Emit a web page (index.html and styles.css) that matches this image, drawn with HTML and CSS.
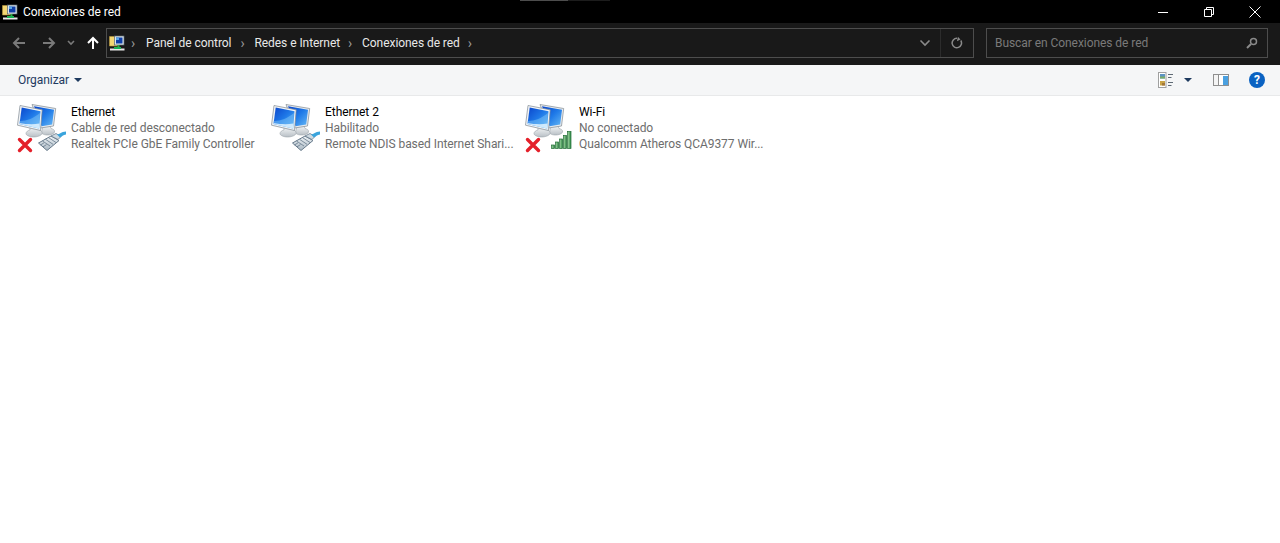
FILE: index.html
```html
<!DOCTYPE html>
<html lang="es">
<head>
<meta charset="utf-8">
<title>Conexiones de red</title>
<link rel="stylesheet" href="styles.css">
</head>
<body>
<svg class="defs" width="0" height="0" aria-hidden="true">
  <defs>
    <linearGradient id="scr" x1="0" y1="0" x2="1" y2="1">
      <stop offset="0" stop-color="#0a45cc"/><stop offset=".5" stop-color="#1f7ae8"/><stop offset="1" stop-color="#66b8f5"/>
    </linearGradient>
    <linearGradient id="foot" x1="0" y1="0" x2="0" y2="1">
      <stop offset="0" stop-color="#f4f6f7"/><stop offset="1" stop-color="#b9c0c6"/>
    </linearGradient>
    <linearGradient id="plug" x1="0" y1="0" x2="0" y2="1">
      <stop offset="0" stop-color="#eef3f6"/><stop offset="1" stop-color="#aab8c3"/>
    </linearGradient>
    <linearGradient id="bar" x1="0" y1="0" x2="1" y2="0">
      <stop offset="0" stop-color="#a9d8a8"/><stop offset="1" stop-color="#2e8a45"/>
    </linearGradient>
    <symbol id="computers" viewBox="0 0 50 54">
      <path d="M27 26h7l1 2.500c2 .5 4 1.500 3.500 3.500-.5 2-4 3-7 3-3 0-6-1-6-3z" fill="url(#foot)" stroke="#9aa3aa" stroke-width=".6"/>
      <path d="M16 4.500 39.700 8.500 37.500 26 24.500 28z" fill="#e8ebee" stroke="#7f8a92" stroke-width=".7"/>
      <path d="M18 6.300 38 9.700 36.200 24.500 25.500 26.200z" fill="url(#scr)"/>
      <path d="M14 27h8l1 2.800c2 .6 3.500 1.700 3 3.700-.6 2.200-5 3.500-8.500 3.500S10 35.500 10 33.500c0-1.800 2-3 4-3.600z" fill="url(#foot)" stroke="#9aa3aa" stroke-width=".6"/>
      <path d="M4 5.500 26.200 9.800 24.500 30.500 1.500 25.200z" fill="#f2f4f6" stroke="#7f8a92" stroke-width=".7"/>
      <path d="M5.700 7.500 24.500 11.200 23.100 28.500 3.500 24z" fill="url(#scr)"/>
      <path d="M3.800 21C11 21 18 18 24 13l-.9 15.500L3.500 24z" fill="#7cc4f7" opacity=".5"/>
      <path d="M3.500 23C11 24.500 18 24.500 23.400 23.500l-.3 5L3.500 24z" fill="#e3f3fd" opacity=".85"/>
    </symbol>
    <symbol id="xmark" viewBox="0 0 16 16">
      <path d="M2.500 2.500 13.500 13.500M13.500 2.500 2.500 13.500" stroke="#e4202a" stroke-width="3.400" stroke-linecap="round" fill="none"/>
    </symbol>
    <symbol id="plugicon" viewBox="0 0 28 20">
      <path d="M.5 12 13 5l8 4.500L9 19.500z" fill="url(#plug)" stroke="#66798a" stroke-width="1"/>
      <path d="M4.500 10 12 15M7.500 8.300 15 13.300M10.500 6.600 18 11.500M2.500 14 6 11.800M5 15.800l3.500-2.200" stroke="#66798a" stroke-width=".8" fill="none"/>
      <path d="M13 5l5-2.500 5 3-3 3z" fill="#cfdae1" stroke="#66798a" stroke-width=".8"/>
      <path d="M19 3.500c3-.5 4-2.500 9-3v3c-3 .3-4 2-6 3z" fill="#3aa4dc"/>
    </symbol>
    <symbol id="signal" viewBox="0 0 22 18">
      <g fill="url(#bar)" stroke="#1f6b34" stroke-width=".7">
        <rect x=".5" y="14" width="3" height="3.500"/>
        <rect x="4.500" y="11" width="3" height="6.500"/>
        <rect x="8.500" y="8" width="3" height="9.500"/>
        <rect x="12.500" y="4.500" width="3" height="13"/>
        <rect x="16.500" y=".5" width="3.500" height="17"/>
      </g>
    </symbol>
    <symbol id="netfolder" viewBox="0 0 16 16">
      <path d="M.5 1.500h5l1 1.500h2v8H.5z" fill="#f3d774" stroke="#b9983a" stroke-width=".6"/>
      <rect x="5.500" y="1" width="9.500" height="9" fill="#dfe6ea" stroke="#58646e" stroke-width=".7"/>
      <rect x="7" y="2.500" width="6.500" height="6" fill="#0f3fa8"/>
      <rect x="7" y="2.500" width="3" height="2.500" fill="#59a5e8"/>
      <rect x="8.500" y="10" width="2" height="3" fill="#2aa84a"/>
      <rect x="1" y="13.500" width="14.500" height="2" fill="#e8e8e8"/>
      <rect x="5" y="12" width="7" height="2" fill="#19b354"/>
    </symbol>
  </defs>
</svg>

<header class="titlebar">
  <svg class="title-icon"><use href="#netfolder"/></svg>
  <span class="title-text">Conexiones de red</span>
  <span class="top-sliver"></span>
  <div class="winbtns">
    <svg class="winbtn" viewBox="0 0 12 12"><path d="M1 6.500h10" stroke="#fff" fill="none"/></svg>
    <svg class="winbtn" viewBox="0 0 12 12"><path d="M1.500 3.500h7v7h-7zM3.500 3.500v-2h7v7h-2" stroke="#fff" fill="none"/></svg>
    <svg class="winbtn" viewBox="0 0 12 12"><path d="M.5 .5l11 11M11.500 .5l-11 11" stroke="#fff" fill="none"/></svg>
  </div>
</header>

<nav class="navbar">
  <div class="navbtns">
    <svg class="nav-arrow" viewBox="0 0 14 14"><path d="M13 7H2M7 2 2 7l5 5" stroke="#7a7a7a" stroke-width="2" fill="none"/></svg>
    <svg class="nav-arrow fwd" viewBox="0 0 14 14"><path d="M1 7h11M7 2l5 5-5 5" stroke="#7a7a7a" stroke-width="2" fill="none"/></svg>
    <svg class="nav-chev" viewBox="0 0 8 6"><path d="M1 1l3 3 3-3" stroke="#7a7a7a" stroke-width="1.600" fill="none"/></svg>
    <svg class="nav-arrow up" viewBox="0 0 14 14"><path d="M7 13V2M2 7l5-5 5 5" stroke="#fff" stroke-width="2" fill="none"/></svg>
  </div>
  <div class="address">
    <svg class="addr-icon"><use href="#netfolder"/></svg>
    <span class="sep first">›</span>
    <span class="crumb lead">Panel de control</span>
    <span class="sep">›</span>
    <span class="crumb">Redes e Internet</span>
    <span class="sep">›</span>
    <span class="crumb">Conexiones de red</span>
    <span class="sep">›</span>
    <span class="spacer"></span>
    <svg class="addr-chev" viewBox="0 0 12 8"><path d="M1.500 1.500 6 6l4.500-4.500" stroke="#8a8a8a" stroke-width="1.600" fill="none"/></svg>
    <span class="refresh">
      <svg class="refresh-icon" viewBox="0 0 12 12"><path d="M9.800 3.500A4.700 4.700 0 1 1 6 1.300" stroke="#8a8a8a" stroke-width="1.500" fill="none"/><path d="M6 0l3.500 1.500L7 4.500z" fill="#8a8a8a" transform="rotate(25 7 2)"/></svg>
    </span>
  </div>
  <div class="search">
    <span class="search-text">Buscar en Conexiones de red</span>
    <svg class="search-icon" viewBox="0 0 12 12"><circle cx="7.500" cy="4.500" r="3" stroke="#8a8a8a" stroke-width="1.500" fill="none"/><path d="M5 7 1 11" stroke="#8a8a8a" stroke-width="2" fill="none"/></svg>
  </div>
</nav>

<div class="toolbar">
  <span class="organize">Organizar</span>
  <span class="caret"></span>
  <span class="spacer"></span>
  <svg class="view-icon" viewBox="0 0 16 16">
    <rect x=".5" y=".5" width="7.500" height="15" fill="#fff" stroke="#a0a0a0"/>
    <rect x="2" y="2" width="5" height="4.500" fill="#5c93c4"/><rect x="2" y="4.500" width="5" height="2" fill="#7bab65"/>
    <rect x="2" y="9" width="5" height="4.500" fill="#c9a445"/><rect x="4" y="11" width="3" height="2.500" fill="#a3773a"/>
    <path d="M10 2.500h5M10 5.500h3.500M10 10.500h5M10 13.500h3.500" stroke="#5f6a75" fill="none"/>
  </svg>
  <span class="caret small"></span>
  <svg class="pane-icon" viewBox="0 0 16 12">
    <rect x=".5" y=".5" width="15" height="11" fill="#fff" stroke="#8f8f8f"/>
    <rect x="1" y="1" width="4" height="10" fill="#f4f4f4"/>
    <rect x="10" y="2" width="5" height="9" fill="#4aa0e0"/>
    <path d="M5.500 1v10" stroke="#8f8f8f"/>
  </svg>
  <span class="help">?</span>
</div>

<main class="items">
  <article class="item">
    <div class="icon">
      <svg class="pc"><use href="#computers"/></svg>
      <svg class="x"><use href="#xmark"/></svg>
      <svg class="plug"><use href="#plugicon"/></svg>
    </div>
    <div class="lines">
      <div class="name">Ethernet</div>
      <div class="info">Cable de red desconectado</div>
      <div class="info">Realtek PCIe GbE Family Controller</div>
    </div>
  </article>
  <article class="item">
    <div class="icon">
      <svg class="pc"><use href="#computers"/></svg>
      <svg class="plug"><use href="#plugicon"/></svg>
    </div>
    <div class="lines">
      <div class="name">Ethernet 2</div>
      <div class="info">Habilitado</div>
      <div class="info">Remote NDIS based Internet Shari...</div>
    </div>
  </article>
  <article class="item">
    <div class="icon">
      <svg class="pc"><use href="#computers"/></svg>
      <svg class="x"><use href="#xmark"/></svg>
      <svg class="wifi"><use href="#signal"/></svg>
    </div>
    <div class="lines">
      <div class="name">Wi-Fi</div>
      <div class="info">No conectado</div>
      <div class="info">Qualcomm Atheros QCA9377 Wir...</div>
    </div>
  </article>
</main>
</body>
</html>
```

FILE: styles.css
```css
* { box-sizing: border-box; }
html, body { margin: 0; height: 100%; }
body {
  background: #fff;
  font-family: Roboto, "Liberation Sans", sans-serif;
  font-size: 12px;
  letter-spacing: -0.06px;
  overflow: hidden;
}
.defs { display: block; height: 0; }
.spacer { flex: 1; }

.titlebar {
  position: relative;
  display: flex;
  align-items: center;
  height: 23px;
  background: #000;
  color: #fff;
  padding-left: 2px;
}
.title-icon { width: 16px; height: 16px; }
.title-text { margin-left: 5px; }
.top-sliver {
  position: absolute;
  top: 0;
  left: 520px;
  width: 90px;
  height: 1px;
  background: linear-gradient(to right, #4d4d4d 0 48px, #1c1c1c 48px);
}
.winbtns { margin-left: auto; display: flex; padding-right: 19px; }
.winbtn { width: 12px; height: 12px; margin-left: 34px; }

.navbar {
  display: flex;
  align-items: center;
  height: 42px;
  background: #191919;
  padding: 0 12px 3px 12px;
}
.navbtns { display: flex; align-items: center; width: 94px; }
.nav-arrow { width: 14px; height: 14px; }
.nav-arrow.fwd { margin-left: 16px; }
.nav-chev { width: 8px; height: 6px; margin-left: 11px; }
.nav-arrow.up { margin-left: 11px; }

.address {
  display: flex;
  align-items: center;
  width: 868px;
  height: 30px;
  border: 1px solid #4d4d4d;
  padding-left: 2px;
  color: #e8e8e8;
}
.addr-icon { width: 16px; height: 16px; margin-right: 6px; }
.sep { color: #9a9a9a; font-size: 14px; width: 6px; margin-right: 8px; }
.sep.first { margin-right: 9px; }
.crumb { margin-right: 8px; white-space: nowrap; }
.crumb.lead { margin-right: 9px; }
.addr-chev { width: 12px; height: 8px; margin-right: 9px; }
.refresh {
  display: flex;
  align-items: center;
  justify-content: center;
  width: 33px;
  height: 100%;
  border-left: 1px solid #2c2c2c;
}
.refresh-icon { width: 12px; height: 12px; }

.search {
  display: flex;
  align-items: center;
  width: 282px;
  height: 30px;
  margin-left: 12px;
  border: 1px solid #4d4d4d;
  padding: 0 9px 0 8px;
  color: #7a7a7a;
}
.search-text { flex: 1; }
.search-icon { width: 12px; height: 12px; }

.toolbar {
  display: flex;
  align-items: center;
  height: 31px;
  background: #f5f6f7;
  border-bottom: 1px solid #e8e9ea;
  padding: 0 15px 0 18px;
  color: #1e3a5f;
}
.caret {
  width: 0;
  height: 0;
  margin-left: 5px;
  border-left: 4px solid transparent;
  border-right: 4px solid transparent;
  border-top: 4px solid #1e3a5f;
}
.caret.small { margin-left: 10px; }
.view-icon { width: 16px; height: 16px; }
.pane-icon { width: 16px; height: 12px; margin-left: 21px; }
.help {
  width: 16px;
  height: 16px;
  margin-left: 20px;
  border-radius: 50%;
  background: #0a62c2;
  color: #fff;
  font-weight: 700;
  font-size: 12px;
  line-height: 16px;
  text-align: center;
}

.items { display: flex; padding: 8px 0 0 16px; }
.item { display: flex; width: 254px; }
.icon { position: relative; width: 50px; height: 54px; margin-top: -4px; flex: none; }
.pc { width: 50px; height: 54px; display: block; }
.x { position: absolute; left: 1px; top: 37px; width: 16px; height: 16px; }
.plug { position: absolute; left: 22px; top: 31px; width: 28px; height: 20px; }
.wifi { position: absolute; left: 27px; top: 31px; width: 22px; height: 18px; }
.lines { margin-left: 5px; line-height: 16px; white-space: nowrap; }
.name { color: #000; }
.info { color: #6d6d6d; }
```
